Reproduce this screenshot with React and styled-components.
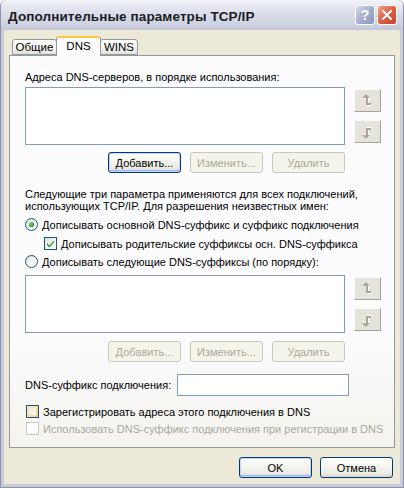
import React from 'react';
import styled, { createGlobalStyle, css } from 'styled-components';

const GlobalStyle = createGlobalStyle`
  html, body {
    margin: 0;
    padding: 0;
    background: #ffffff;
  }
  * {
    box-sizing: border-box;
  }
`;

const Window = styled.div`
  width: 404px;
  height: 488px;
  display: flex;
  flex-direction: column;
  background: #c9ccdb;
  border: 1px solid #8d91a8;
  border-top: none;
  border-radius: 6px 6px 0 0;
  overflow: hidden;
  font-family: "Liberation Sans", Arial, sans-serif;
  font-size: 11px;
  color: #000;
`;

const TitleBar = styled.div`
  height: 30px;
  flex-shrink: 0;
  display: flex;
  align-items: center;
  padding: 0 6px 0 7px;
  background: linear-gradient(to bottom, #f4f5f9 0%, #dfe1ec 35%, #cfd2e2 80%, #c3c6d8 100%);
`;

const Title = styled.div`
  flex: 1;
  font-family: "Liberation Sans", Arial, sans-serif;
  font-weight: bold;
  font-size: 13.5px;
  color: #1c1c24;
  letter-spacing: 0.1px;
  padding-top: 2px;
`;

const TitleButton = styled.div`
  width: 20px;
  height: 20px;
  margin-left: 2px;
  border: 1px solid #ffffff;
  border-radius: 3px;
  display: flex;
  align-items: center;
  justify-content: center;
  color: #fff;
  font-weight: bold;
  font-size: 14px;
  ${(p) =>
    p.close
      ? css`
          background: linear-gradient(135deg, #f0a08a 0%, #dc5a40 55%, #c7432c 100%);
        `
      : css`
          background: linear-gradient(135deg, #d4d9ec 0%, #a2abcc 55%, #8e98bd 100%);
        `}
`;

const Body = styled.div`
  flex: 1;
  margin: 0 3px 3px 3px;
  background: #ece9d8;
  display: flex;
  flex-direction: column;
  padding: 6px 5px 0 5px;
`;

const TabRow = styled.div`
  display: flex;
  align-items: flex-end;
  height: 19px;
  padding-left: 4px;
  position: relative;
  z-index: 1;
`;

const Tab = styled.div`
  height: ${(p) => (p.active ? '20px' : '16px')};
  width: ${(p) => p.w}px;
  margin-bottom: ${(p) => (p.active ? '-1px' : '0')};
  display: flex;
  align-items: center;
  justify-content: center;
  border: 1px solid #919b9c;
  border-bottom: ${(p) => (p.active ? 'none' : '1px solid #919b9c')};
  border-radius: 3px 3px 0 0;
  background: ${(p) =>
    p.active ? '#fcfcfe' : 'linear-gradient(to bottom, #ffffff 0%, #f3f3ef 60%, #e2e1da 100%)'};
  border-top: ${(p) => (p.active ? '2px solid #ffc83c' : '1px solid #919b9c')};
  margin-left: -1px;
  padding-bottom: ${(p) => (p.active ? '3px' : '0')};
  font-size: 11.5px;
`;

const Panel = styled.div`
  height: 393px;
  border: 1px solid #919b9c;
  background: linear-gradient(to bottom, #fcfcfe 0%, #fcfcfe 70%, #f4f3ee 100%);
  padding: 15px 0 0 15px;
  display: flex;
  flex-direction: column;
`;

const Label = styled.div`
  height: 13px;
  line-height: 13px;
  white-space: nowrap;
  color: ${(p) => (p.disabled ? '#aca899' : '#000')};
`;

const ListRow = styled.div`
  display: flex;
  align-items: flex-start;
  margin-top: ${(p) => p.mt || 0}px;
`;

const ListBox = styled.div`
  width: 320px;
  height: 58px;
  background: #ffffff;
  border: 1px solid #7f9db9;
`;

const ArrowColumn = styled.div`
  display: flex;
  flex-direction: column;
  gap: 8px;
  margin-left: 9px;
  padding-top: 2px;
`;

const ArrowButton = styled.div`
  width: 27px;
  height: 23px;
  background: #e6e4da;
  border-top: 1px solid #fbfbf8;
  border-left: 1px solid #fbfbf8;
  border-right: 1px solid #a7a597;
  border-bottom: 1px solid #a7a597;
  display: flex;
  align-items: center;
  justify-content: center;
`;

const ButtonRow = styled.div`
  display: flex;
  justify-content: flex-end;
  gap: 9px;
  width: 320px;
  margin-top: ${(p) => p.mt || 0}px;
`;

const Button = styled.div`
  width: ${(p) => p.w || 73}px;
  height: 21px;
  border: 1px solid ${(p) => (p.disabled ? '#c9c7ba' : '#003c74')};
  border-radius: 3px;
  display: flex;
  align-items: center;
  justify-content: center;
  color: ${(p) => (p.disabled ? '#aca899' : '#000')};
  background: ${(p) =>
    p.disabled
      ? '#f5f4ea'
      : 'linear-gradient(to bottom, #ffffff 0%, #f4f4f0 45%, #ecebe4 80%, #d8d6cb 100%)'};
  box-shadow: ${(p) => (p.focused ? 'inset 0 0 0 1px #c2d3fc, inset 0 -1px 0 1px #9db7f1' : 'none')};
  white-space: nowrap;
`;

const Paragraph = styled.div`
  margin-top: 15px;
  line-height: 12px;
  white-space: nowrap;
`;

const OptionRow = styled.div`
  display: flex;
  align-items: center;
  height: 13px;
  margin-top: ${(p) => p.mt || 0}px;
  margin-left: ${(p) => p.indent || 0}px;
  gap: 4px;
  white-space: nowrap;
  color: ${(p) => (p.disabled ? '#aca899' : '#000')};
`;

const Radio = styled.span`
  width: 13px;
  height: 13px;
  border-radius: 50%;
  border: 1px solid #1c5180;
  background: linear-gradient(135deg, #dcdcd7 0%, #ffffff 70%);
  display: flex;
  align-items: center;
  justify-content: center;
  flex-shrink: 0;
  &::after {
    content: '';
    display: ${(p) => (p.checked ? 'block' : 'none')};
    width: 5px;
    height: 5px;
    border-radius: 50%;
    background: radial-gradient(circle at 35% 35%, #6ee06e 0%, #21a121 60%, #138d13 100%);
  }
`;

const Checkbox = styled.span`
  width: 13px;
  height: 13px;
  border: 1px solid ${(p) => (p.disabled ? '#cac8bb' : '#1c5180')};
  background: ${(p) =>
    p.disabled
      ? '#ffffff'
      : p.hover
      ? 'linear-gradient(135deg, #fbeccb 0%, #f2cf8c 100%)'
      : 'linear-gradient(135deg, #dcdcd7 0%, #ffffff 80%)'};
  display: flex;
  align-items: center;
  justify-content: center;
  flex-shrink: 0;
  position: relative;
  &::before {
    content: '';
    display: ${(p) => (p.hover ? 'block' : 'none')};
    position: absolute;
    inset: 2px;
    background: linear-gradient(135deg, #efe9dc 0%, #fdfcf8 100%);
  }
`;

const FieldRow = styled.div`
  display: flex;
  align-items: center;
  margin-top: 12px;
`;

const TextInput = styled.div`
  width: 172px;
  height: 22px;
  margin-left: 6px;
  background: #ffffff;
  border: 1px solid #7f9db9;
`;

const Footer = styled.div`
  display: flex;
  justify-content: flex-end;
  gap: 8px;
  padding: 9px 2px 0 0;
`;

const ArrowIcon = ({ down }) => (
  <svg width="12" height="14" viewBox="0 0 12 14" style={down ? { transform: 'scaleY(-1)' } : undefined}>
    <g transform="translate(1,1)">
      <path d="M4 0 L8 4 L6 4 L6 9 L9 9 L9 11 L4 11 L4 4 L0 4 Z" fill="#ffffff" />
    </g>
    <path d="M4 0 L8 4 L6 4 L6 9 L9 9 L9 11 L4 11 L4 4 L0 4 Z" fill="#aca899" />
  </svg>
);

const CheckMark = () => (
  <svg width="9" height="9" viewBox="0 0 9 9">
    <path d="M1 4 L3.5 6.5 L8 1.5 L8 3.5 L3.5 8.5 L1 6 Z" fill="#21a121" />
  </svg>
);

const App = () => {
  return (
    <>
      <GlobalStyle />
      <Window>
        <TitleBar>
          <Title>Дополнительные параметры TCP/IP</Title>
          <TitleButton>?</TitleButton>
          <TitleButton close>
            <svg width="10" height="10" viewBox="0 0 10 10">
              <path d="M1 1 L9 9 M9 1 L1 9" stroke="#ffffff" strokeWidth="2" strokeLinecap="square" />
            </svg>
          </TitleButton>
        </TitleBar>
        <Body>
          <TabRow>
            <Tab w={45}>Общие</Tab>
            <Tab active w={45}>DNS</Tab>
            <Tab w={38}>WINS</Tab>
          </TabRow>
          <Panel>
            <Label>Адреса DNS-серверов, в порядке использования:</Label>
            <ListRow mt={3}>
              <ListBox />
              <ArrowColumn>
                <ArrowButton>
                  <ArrowIcon />
                </ArrowButton>
                <ArrowButton>
                  <ArrowIcon down />
                </ArrowButton>
              </ArrowColumn>
            </ListRow>
            <ButtonRow mt={7}>
              <Button focused>Добавить...</Button>
              <Button disabled>Изменить...</Button>
              <Button disabled>Удалить</Button>
            </ButtonRow>
            <Paragraph>
              Следующие три параметра применяются для всех подключений,
              <br />
              использующих TCP/IP. Для разрешения неизвестных имен:
            </Paragraph>
            <OptionRow mt={6} indent={0}>
              <Radio checked />
              <span>Дописывать основной DNS-суффикс и суффикс подключения</span>
            </OptionRow>
            <OptionRow mt={6} indent={19}>
              <Checkbox>
                <CheckMark />
              </Checkbox>
              <span>Дописывать родительские суффиксы осн. DNS-суффикса</span>
            </OptionRow>
            <OptionRow mt={5}>
              <Radio />
              <span>Дописывать следующие DNS-суффиксы (по порядку):</span>
            </OptionRow>
            <ListRow mt={7}>
              <ListBox />
              <ArrowColumn>
                <ArrowButton>
                  <ArrowIcon />
                </ArrowButton>
                <ArrowButton>
                  <ArrowIcon down />
                </ArrowButton>
              </ArrowColumn>
            </ListRow>
            <ButtonRow mt={8}>
              <Button disabled>Добавить...</Button>
              <Button disabled>Изменить...</Button>
              <Button disabled>Удалить</Button>
            </ButtonRow>
            <FieldRow>
              <Label>DNS-суффикс подключения:</Label>
              <TextInput />
            </FieldRow>
            <OptionRow mt={9} indent={1}>
              <Checkbox hover />
              <span>Зарегистрировать адреса этого подключения в DNS</span>
            </OptionRow>
            <OptionRow mt={4} indent={1} disabled>
              <Checkbox disabled />
              <span>Использовать DNS-суффикс подключения при регистрации в DNS</span>
            </OptionRow>
          </Panel>
          <Footer>
            <Button w={73} focused>OK</Button>
            <Button w={73}>Отмена</Button>
          </Footer>
        </Body>
      </Window>
    </>
  );
};

export default App;
